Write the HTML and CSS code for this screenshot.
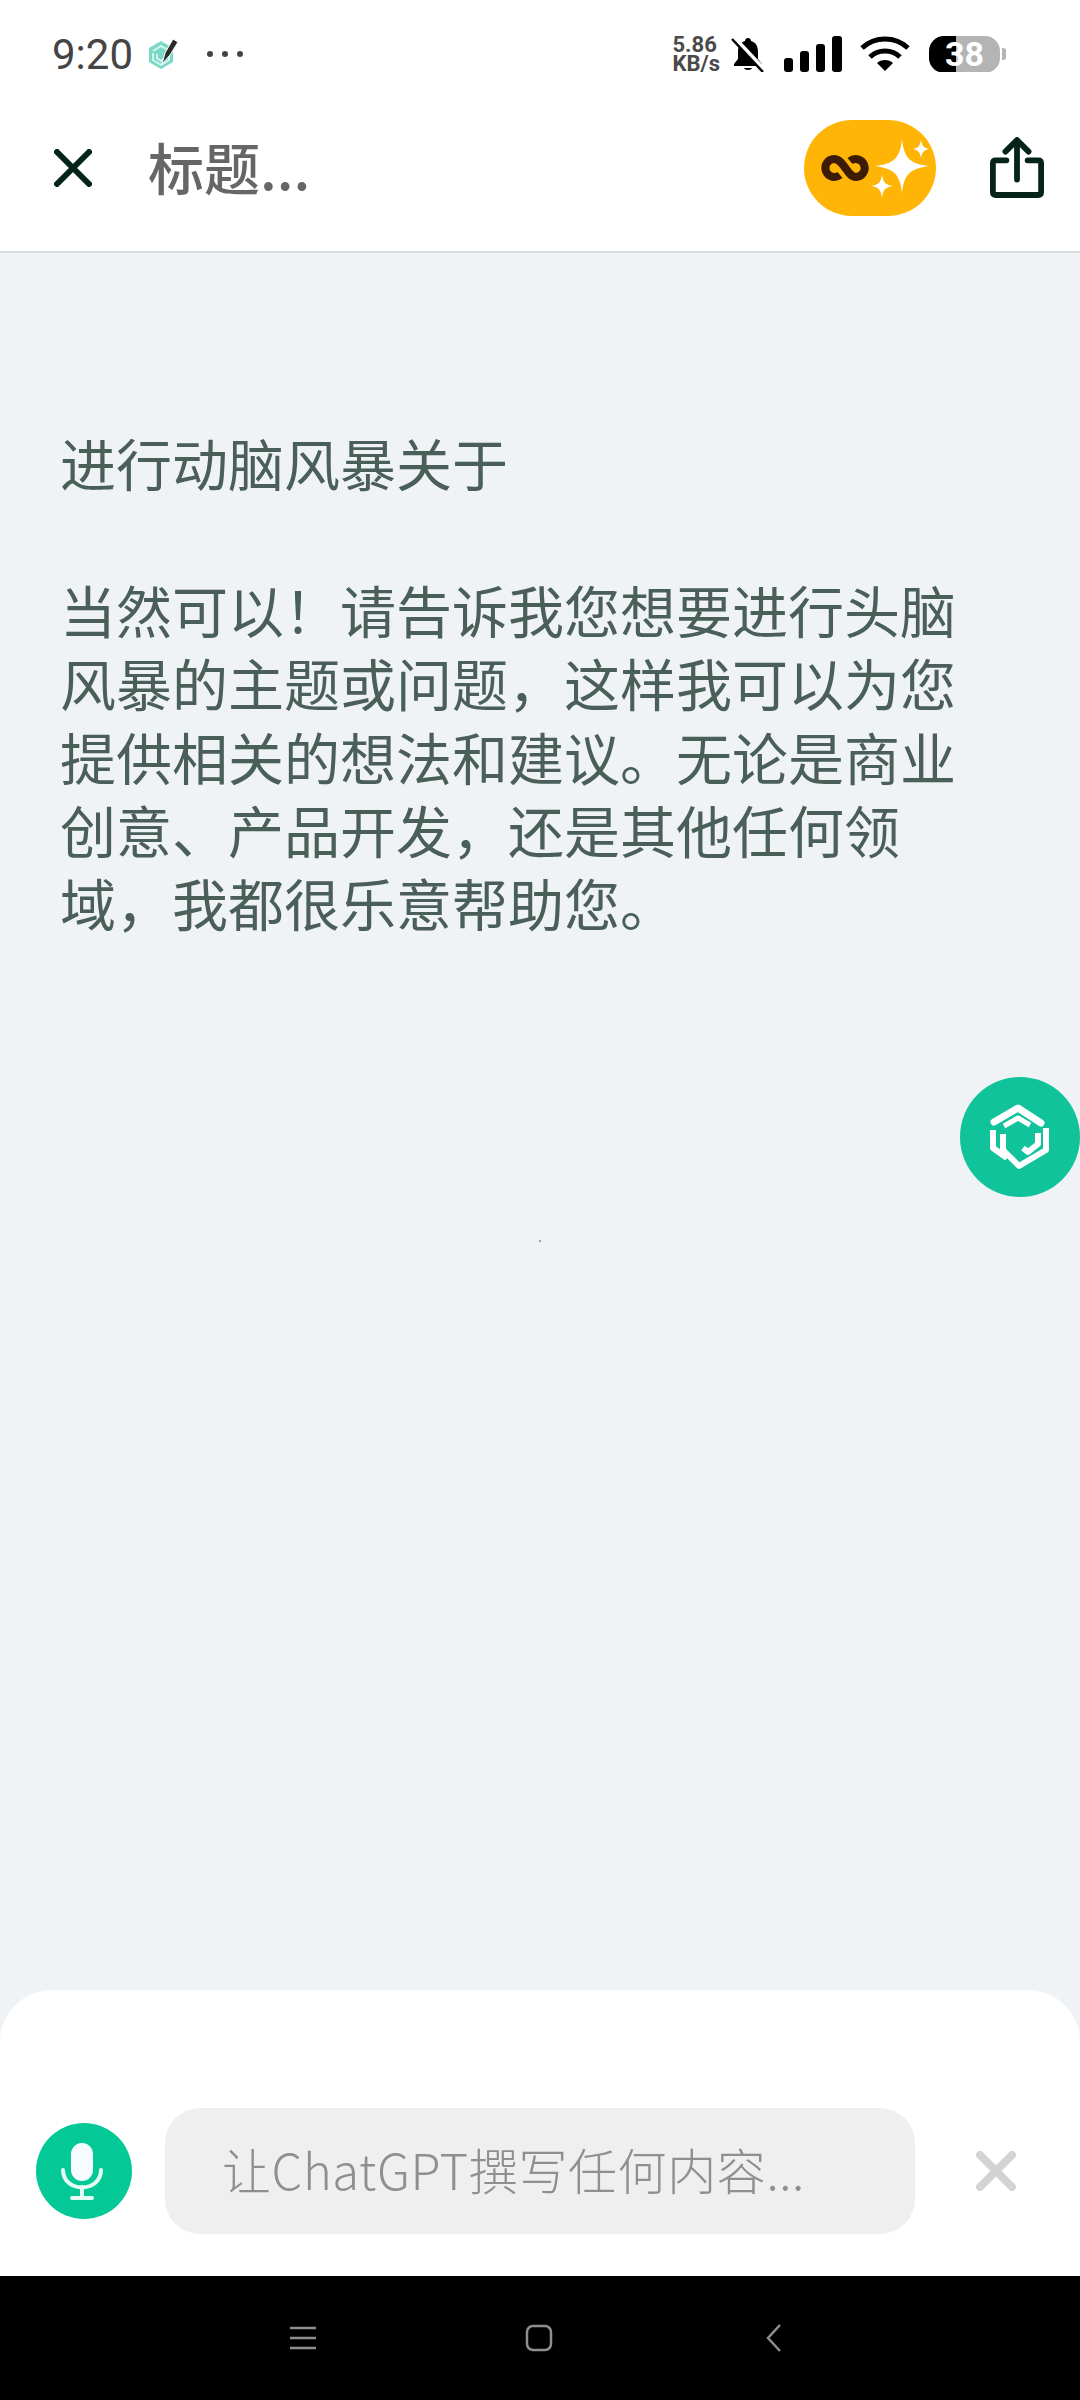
FILE: index.html
```html
<!DOCTYPE html>
<html lang="zh-CN">

<head>
    <meta charset="UTF-8">
    <meta name="viewport" content="width=device-width, initial-scale=1.0">
    <title>标题</title>

    <link rel="stylesheet" href="styles.css">
</head>

<body>
    <div class="screen">
        <!-- Status bar -->
        <div class="status-bar">
            <div class="status-left">
                <span class="time">9:20</span>
                <svg class="app-icon" viewBox="0 0 32 32" width="32" height="32">
                    <path d="M14 3 L26 10 V24 L14 31 L2 24 V10 Z" fill="#7ad8c6"/>
                    <path d="M6 13 L14 8 L20 11.500 M6 15 V22 L14 27 L22 22 V15 M10 16 V20 L14 23 L18 20" fill="none" stroke="#d5f3ec" stroke-width="2"/>
                    <path d="M15 26 L18 15 L26 1 L31 4 L23 17 Z" fill="#2b2b2b" stroke="#fff" stroke-width="1"/>
                </svg>
                <span class="more-dots"><i></i><i></i><i></i></span>
            </div>
            <div class="status-right">
                <div class="net-speed">5.86<br>KB/s</div>
                <svg class="bell" viewBox="0 0 34 36" width="34" height="36">
                    <path d="M17 2 C19 2 20 3.500 20 5 C25.500 6.500 27 11 27 16 V23 L31 28 V30 H3 V28 L7 23 V16 C7 11 8.500 6.500 14 5 C14 3.500 15 2 17 2 Z" fill="#000"/>
                    <path d="M13 32 H21 C20.500 34.500 13.500 34.500 13 32 Z" fill="#000"/>
                    <path d="M2 1 L33 34" stroke="#fff" stroke-width="5"/>
                    <path d="M1 3 L32 36" stroke="#000" stroke-width="2.500"/>
                </svg>
                <svg class="signal" viewBox="0 0 60 36" width="60" height="36">
                    <rect x="1" y="22" width="9" height="14" rx="3"/>
                    <rect x="17" y="15" width="9" height="21" rx="3"/>
                    <rect x="33" y="8" width="9" height="28" rx="3"/>
                    <rect x="49" y="0" width="10" height="36" rx="3"/>
                </svg>
                <svg class="wifi" viewBox="0 0 50 36" width="50" height="36">
                    <path d="M2 12 C15 0 35 0 48 12 M10 21 C18 13 32 13 40 21" fill="none" stroke="#000" stroke-width="5"/>
                    <path d="M17 27 C21 23 29 23 33 27 L25 35 Z" fill="#000"/>
                </svg>
                <div class="battery"><span>38</span></div>
                <div class="battery-nub"></div>
            </div>
        </div>

        <!-- Title bar -->
        <header class="title-bar">
            <svg class="close-icon" viewBox="0 0 38 38" width="38" height="38">
                <path d="M3 3 L35 35 M35 3 L3 35" stroke="#04231b" stroke-width="6" stroke-linecap="round"/>
            </svg>
            <h1>标题...</h1>
            <div class="pro-badge">
                <svg viewBox="0 0 132 96" width="132" height="96">
                    <path d="M36 55 A9 9 0 1 1 30 39 C40 39 43 57 52 57 A9 9 0 1 0 46 41" fill="none" stroke="#3d1c05" stroke-width="8"/>
                    <path d="M98 19 C100 38 106 44 125 46 C106 49 100 54 98 73 C96 54 90 49 71 46 C90 44 96 38 98 19 Z" fill="#fff"/>
                    <path d="M117 20 C118 26 120 28 125 29 C120 30 118 32 117 38 C116 32 114 30 109 29 C114 28 116 26 117 20 Z" fill="#fff"/>
                    <path d="M78 54 C79 62 81 65 89 66 C81 67 79 70 78 78 C77 70 75 67 67 66 C75 65 77 62 78 54 Z" fill="#fff"/>
                </svg>
            </div>
            <svg class="share-icon" viewBox="0 0 56 64" width="54" height="62">
                <path d="M28 44 V4 M16 15 L28 3 L40 15" fill="none" stroke="#04231b" stroke-width="6" stroke-linecap="round" stroke-linejoin="round"/>
                <path d="M17 24 H6 C4 24 3 25 3 27 V57 C3 59 4 60 6 60 H50 C52 60 53 59 53 57 V27 C53 25 52 24 50 24 H39" fill="none" stroke="#04231b" stroke-width="6" stroke-linecap="round"/>
            </svg>
        </header>

        <!-- Generated text -->
        <main class="content">
            <p class="prompt">进行动脑风暴关于</p>
            <p>当然可以！请告诉我您想要进行头脑风暴的主题或问题，这样我可以为您提供相关的想法和建议。无论是商业创意、产品开发，还是其他任何领域，我都很乐意帮助您。</p>
        </main>

        <div class="speck"></div>

        <button class="float-btn">
            <svg viewBox="0 0 120 120" width="120" height="120">
                <circle cx="60" cy="60" r="60" fill="#11c39a"/>
                <path d="M34 45 L58 31 L81 46" fill="none" stroke="#fff" stroke-width="7" stroke-linecap="round" stroke-linejoin="round"/>
                <path d="M44 49 L58 41 L70 48" fill="none" stroke="#fff" stroke-width="5" stroke-linejoin="round"/>
                <path d="M33 53 V71 L47 81" fill="none" stroke="#fff" stroke-width="6" stroke-linejoin="round"/>
                <path d="M43 57 V73 L59 89 L86 73 V51" fill="none" stroke="#fff" stroke-width="6" stroke-linejoin="round"/>
                <path d="M78 56 V67 L68 75 L63 71" fill="none" stroke="#fff" stroke-width="6" stroke-linejoin="round"/>
            </svg>
        </button>

        <!-- Input area -->
        <div class="composer">
            <button class="mic-btn">
                <svg viewBox="0 0 96 96" width="96" height="96">
                    <rect x="35" y="20" width="22" height="38" rx="11" fill="#f6fbff"/>
                    <path d="M27 47 C27 70 65 70 65 47" fill="none" stroke="#e5fbf5" stroke-width="4" stroke-linecap="round"/>
                    <path d="M46 64 V75 M36 75 H56" fill="none" stroke="#e5fbf5" stroke-width="4" stroke-linecap="round"/>
                </svg>
            </button>
            <div class="input-box">让ChatGPT撰写任何内容...</div>
            <svg class="clear-icon" viewBox="0 0 40 40" width="40" height="40">
                <path d="M4 4 L36 36 M36 4 L4 36" stroke="#d2d4d3" stroke-width="8" stroke-linecap="round"/>
            </svg>
        </div>

        <!-- Android nav bar -->
        <nav class="nav-bar">
            <svg viewBox="0 0 28 24" width="28" height="24">
                <path d="M1 2 H27 M1 12 H27 M1 22 H27" stroke="#8e8e8e" stroke-width="2.500"/>
            </svg>
            <svg class="nav-home" viewBox="0 0 28 28" width="28" height="28">
                <rect x="2" y="2" width="24" height="24" rx="6" fill="none" stroke="#8e8e8e" stroke-width="2.500"/>
            </svg>
            <svg viewBox="0 0 18 28" width="18" height="28">
                <path d="M15 1 L3 14 L15 27" fill="none" stroke="#8e8e8e" stroke-width="2.500"/>
            </svg>
        </nav>
    </div>
</body>
</html>
```

FILE: styles.css
```css
* {
    margin: 0;
    padding: 0;
    box-sizing: border-box;
}

body {
    font-family: "Noto Sans CJK SC", "Noto Sans", sans-serif;
}

.screen {
    position: relative;
    display: flex;
    flex-direction: column;
    width: 1080px;
    height: 2400px;
    overflow: hidden;
    background-color: #eff3f6;
}

/* Status bar */
.status-bar {
    display: flex;
    justify-content: space-between;
    align-items: center;
    height: 72px;
    padding: 36px 74px 0 52px;
    background-color: #fff;
}

.status-left,
.status-right {
    display: flex;
    align-items: center;
}

.time {
    padding-top: 2px;
    font-family: Roboto, sans-serif;
    font-size: 42px;
    line-height: 36px;
    color: #444;
}

.app-icon {
    margin-left: 14px;
}

.more-dots {
    display: flex;
    gap: 9px;
    margin-left: 28px;
}

.more-dots i {
    width: 6px;
    height: 6px;
    border-radius: 50%;
    background-color: #444;
}

.net-speed {
    font-family: Roboto, sans-serif;
    font-size: 22px;
    line-height: 19px;
    font-weight: 700;
    color: #4a4a4a;
}

.bell {
    margin-left: 11px;
}

.signal {
    margin-left: 18px;
}

.wifi {
    margin-left: 17px;
}

.battery {
    display: flex;
    align-items: center;
    justify-content: center;
    width: 71px;
    height: 37px;
    margin-left: 19px;
    border-radius: 15px;
    background: linear-gradient(90deg, #000 38%, #b4b4b4 38%);
    color: #fff;
    font-family: Roboto, sans-serif;
    font-size: 34px;
    font-weight: 700;
}

.battery-nub {
    width: 4px;
    height: 12px;
    margin-left: 2px;
    border-radius: 0 3px 3px 0;
    background-color: #b4b4b4;
}

/* Title bar */
.title-bar {
    display: flex;
    align-items: center;
    height: 181px;
    padding: 12px 36px 0 54px;
    border-bottom: 2px solid #d8dcde;
    background-color: #fff;
}

.title-bar h1 {
    flex: 1;
    margin-left: 56px;
    padding-bottom: 5px;
    font-size: 56px;
    font-weight: 500;
    color: #666;
}

.pro-badge {
    width: 132px;
    height: 96px;
    margin-right: 54px;
    border-radius: 48px;
    background-color: #ffb506;
}

.pro-badge svg,
.float-btn svg,
.mic-btn svg {
    display: block;
}

/* Generated text */
.content {
    flex: 1;
    padding: 172px 100px 0 60px;
    font-size: 56px;
    line-height: 73.400px;
    color: #4a5f58;
}

.prompt {
    margin-bottom: 73.400px;
}

.speck {
    position: absolute;
    top: 1240px;
    left: 539px;
    width: 2px;
    height: 2px;
    background-color: #9aa5a5;
}

.float-btn {
    position: absolute;
    top: 1077px;
    right: 0;
    width: 120px;
    height: 120px;
    border: none;
    background: none;
}

/* Input area */
.composer {
    display: flex;
    align-items: center;
    height: 286px;
    padding: 118px 0 42px 36px;
    border-radius: 52px 52px 0 0;
    background-color: #fff;
}

.mic-btn {
    width: 96px;
    height: 96px;
    border: none;
    border-radius: 50%;
    background-color: #04c896;
}

.input-box {
    display: flex;
    align-items: center;
    width: 750px;
    height: 126px;
    margin-left: 33px;
    padding: 0 0 6px 57px;
    border-radius: 35px;
    background-color: #efefef;
    font-size: 49px;
    font-weight: 300;
    letter-spacing: 0.600px;
    color: #8f8f8f;
}

.clear-icon {
    margin-left: 61px;
}

/* Android nav bar */
.nav-bar {
    display: flex;
    align-items: center;
    justify-content: center;
    gap: 212px;
    height: 124px;
    padding-right: 8px;
    background-color: #000;
}

.nav-home {
    margin-left: -4px;
}
```
